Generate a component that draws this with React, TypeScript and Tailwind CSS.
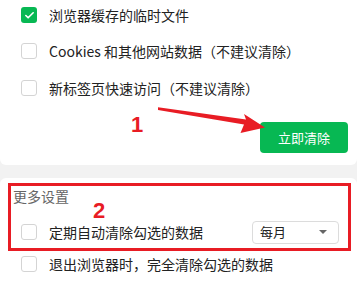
import { Check } from 'lucide-react';

const font = { fontFamily: '"Noto Sans CJK SC", "Noto Sans", sans-serif' };

function Box({ checked = false }: { checked?: boolean }) {
  return checked ? (
    <span className="flex h-[16px] w-[16px] shrink-0 items-center justify-center rounded-[3px] bg-[#07b853]">
      <Check className="h-[11px] w-[11px] text-white" strokeWidth={3.5} />
    </span>
  ) : (
    <span className="h-[16px] w-[16px] shrink-0 rounded-[3px] border border-[#d4d4d4] bg-white" />
  );
}

function Row({ label, checked, className }: { label: string; checked?: boolean; className: string }) {
  return (
    <div className={`flex h-[16px] items-center gap-[12px] pl-[21px] ${className}`}>
      <Box checked={checked} />
      <span className="whitespace-nowrap text-[14px] leading-[20px] text-[#222]">{label}</span>
    </div>
  );
}

export default function App() {
  return (
    <div className="relative flex h-[287px] w-[357px] flex-col overflow-hidden bg-[#f2f2f2]" style={font}>
      {/* Clear data card */}
      <div className="flex h-[165px] flex-col rounded-b-[6px] bg-white">
        <Row className="mt-[7px]" checked label="浏览器缓存的临时文件" />
        <Row className="mt-[20px]" label="Cookies 和其他网站数据（不建议清除）" />
        <Row className="mt-[21px]" label="新标签页快速访问（不建议清除）" />
        <button className="mr-[9px] mt-[26px] flex h-[31px] w-[88px] items-center justify-center self-end rounded-[4px] bg-[#07b853] text-[13px] text-white">
          立即清除
        </button>
      </div>

      {/* More settings card */}
      <div className="mt-[13px] flex flex-1 flex-col rounded-t-[6px] bg-white">
        <div className="pl-[13px] pt-[9px] text-[14px] leading-[18px] text-[#666]">更多设置</div>
        <div className="mt-[19px] flex h-[16px] items-center pr-[18px]">
          <Row className="flex-1" label="定期自动清除勾选的数据" />
          <div className="flex h-[23px] w-[87px] items-center justify-between rounded-[4px] border border-[#dcdcdc] pl-[7px] pr-[11px] text-[13px] text-[#222]">
            <span>每月</span>
            <span className="h-0 w-0 border-x-[4px] border-t-[4px] border-x-transparent border-t-[#666]" />
          </div>
        </div>
        <Row className="mt-[16px]" label="退出浏览器时，完全清除勾选的数据" />
      </div>

      {/* Annotations */}
      <svg className="pointer-events-none absolute inset-0" width="357" height="287" viewBox="0 0 357 287">
        <polygon
          points="158,107.3 246,119.5 244,114 265,127.5 240.5,133 244,124.5 158,110"
          fill="#e81c24"
        />
      </svg>
      <span
        className="absolute left-[131px] top-[114px] text-[22px] font-bold leading-none text-[#e81c24]"
        style={{ fontFamily: '"Liberation Sans", Arial, sans-serif' }}
      >
        1
      </span>
      <span
        className="absolute left-[93px] top-[200px] text-[22px] font-bold leading-none text-[#e81c24]"
        style={{ fontFamily: '"Liberation Sans", Arial, sans-serif' }}
      >
        2
      </span>
      <div className="pointer-events-none absolute left-[8px] top-[183px] h-[68px] w-[343px] border-[3px] border-[#e81c24]" />
    </div>
  );
}
